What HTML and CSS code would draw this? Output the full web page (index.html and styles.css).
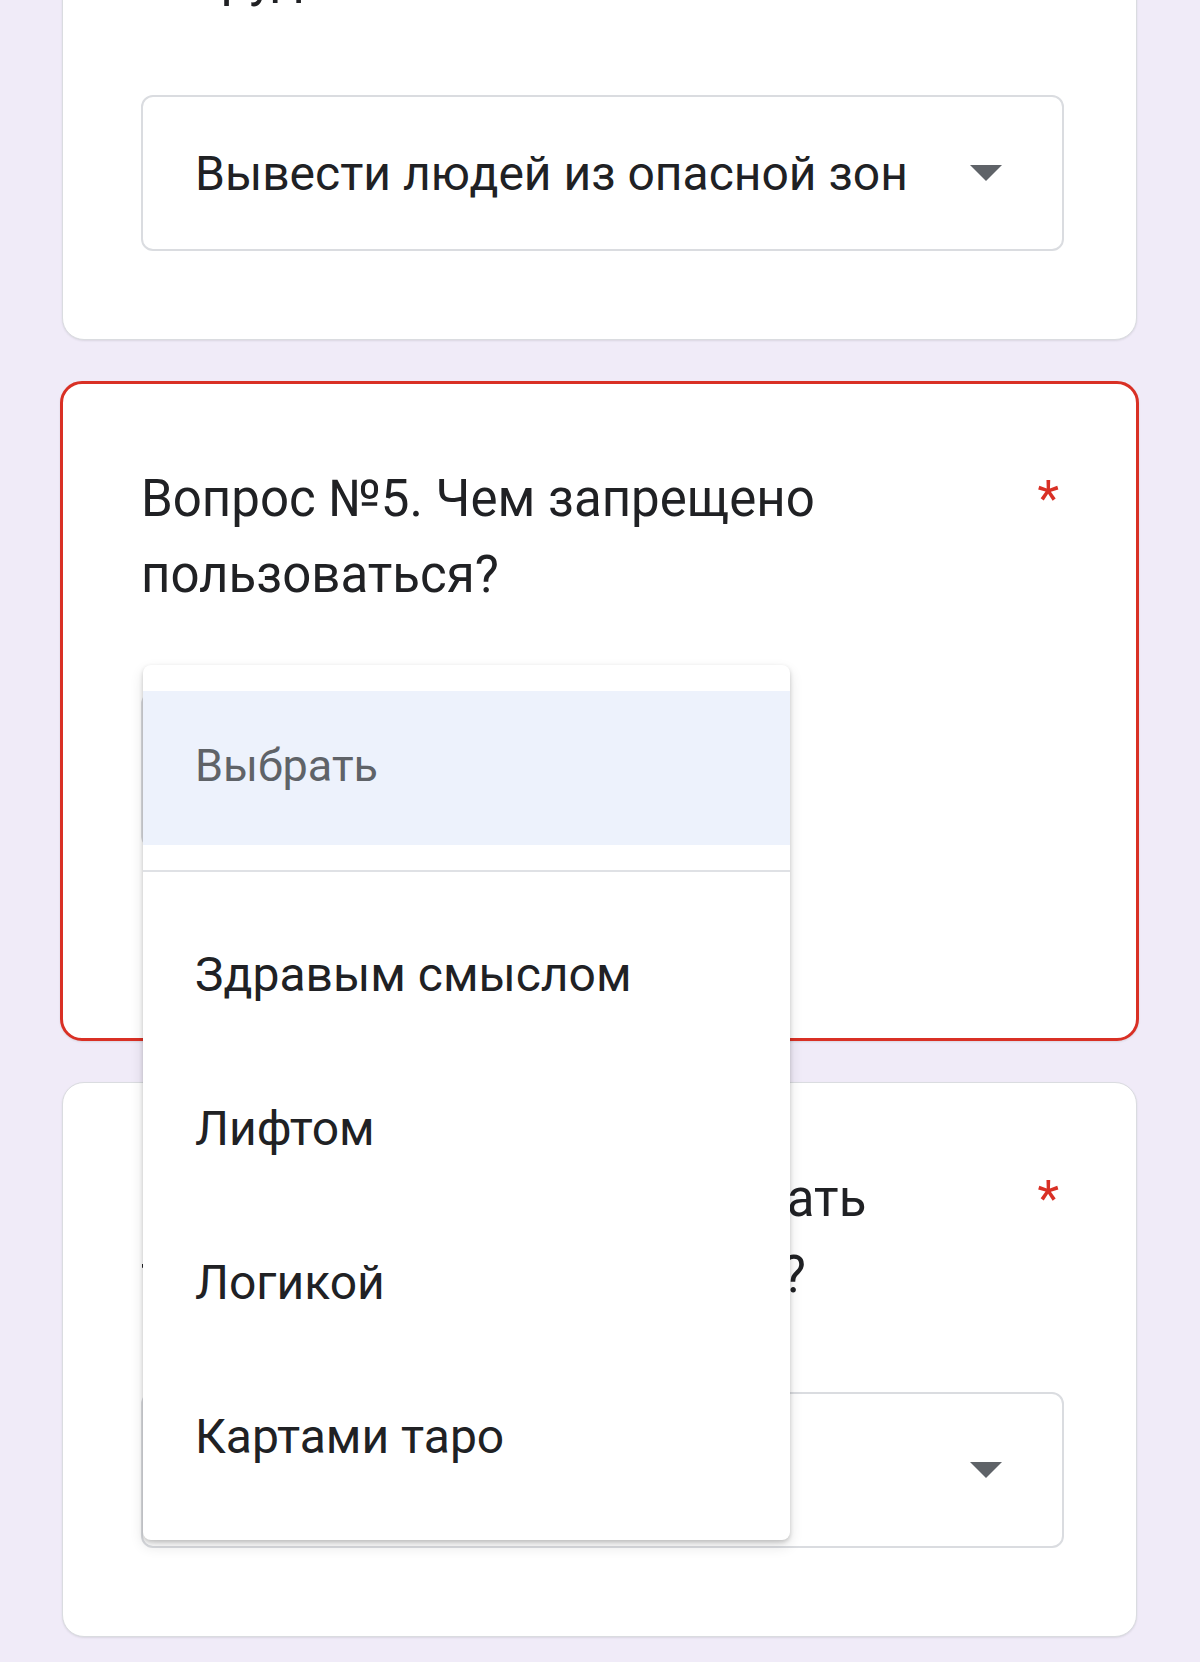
FILE: index.html
```html
<!DOCTYPE html>
<html lang="ru">
<head>
<meta charset="utf-8">
<title>Форма</title>
<link rel="stylesheet" href="styles.css">
</head>
<body>
<main class="form">
  <section class="card">
    <div class="question">
      <div class="question-text">Вопрос №4. Какова первая задача<br>сотрудников?</div>
      <span class="required">*</span>
    </div>
    <div class="select select--wide">
      <span class="select-value">Вывести людей из опасной зоны</span>
      <svg class="select-arrow" width="32" height="16" viewBox="0 0 32 16"><path d="M0 0H32L16 16Z"/></svg>
    </div>
  </section>

  <section class="card card--error">
    <div class="question">
      <div class="question-text">Вопрос №5. Чем запрещено<br>пользоваться?</div>
      <span class="required">*</span>
    </div>
    <div class="select-anchor">
      <div class="select select--compact">
        <span class="select-value select-value--placeholder">Выбрать</span>
        <svg class="select-arrow" width="32" height="16" viewBox="0 0 32 16"><path d="M0 0H32L16 16Z"/></svg>
      </div>
      <ul class="menu">
        <li class="menu-item menu-item--placeholder">Выбрать</li>
        <li class="menu-divider"></li>
        <li class="menu-item">Здравым смыслом</li>
        <li class="menu-item">Лифтом</li>
        <li class="menu-item">Логикой</li>
        <li class="menu-item">Картами таро</li>
      </ul>
    </div>
    <div class="error-msg">Это обязательный вопрос.</div>
  </section>

  <section class="card">
    <div class="question">
      <div class="question-text">Вопрос №6. Что нужно делать<br>тому, кто обнаружил огонь?</div>
      <span class="required">*</span>
    </div>
    <div class="select select--wide">
      <span class="select-value select-value--placeholder">Выбрать</span>
      <svg class="select-arrow" width="32" height="16" viewBox="0 0 32 16"><path d="M0 0H32L16 16Z"/></svg>
    </div>
  </section>
</main>
</body>
</html>
```

FILE: styles.css
```css
* { box-sizing: border-box; }

html, body {
  margin: 0;
  padding: 0;
}

body {
  background: #f0ebf8;
  font-family: Roboto, "Noto Sans", "Liberation Sans", sans-serif;
  color: #202124;
  overflow: hidden;
}

.form {
  display: flex;
  flex-direction: column;
  gap: 41px;
  margin-top: -215px;
  padding: 0 63px 40px 62px;
}

.card {
  background: #fff;
  border: 1px solid #dadce0;
  border-radius: 22px;
  padding: 78px 72px 88px 78px;
  box-shadow: 0 1px 2px rgba(60, 64, 67, 0.12);
}

.card--error {
  border: 3px solid #d93025;
  margin: 0 -2px;
  padding-top: 77px;
  padding-bottom: 86px;
}

.question {
  display: flex;
  align-items: flex-start;
  justify-content: space-between;
  font-size: 51px;
  line-height: 76px;
  margin-bottom: 79px;
}

.question-text {
  white-space: nowrap;
}

.required {
  color: #d93025;
  margin-right: 5px;
  font-size: 50px;
}

.select {
  height: 156px;
  border: 2px solid #dadce0;
  border-radius: 12px;
  display: flex;
  align-items: center;
  gap: 65px;
  padding: 0 60px 0 52px;
  background: #fff;
}

.select--compact {
  width: 649px;
}

.select-value {
  flex: 1;
  min-width: 0;
  overflow: hidden;
  white-space: nowrap;
  font-size: 48px;
  color: #202124;
}

.select-value--placeholder {
  color: #5f6368;
}

.select-arrow {
  flex: none;
  fill: #5f6368;
}

.select-anchor {
  position: relative;
}

.menu {
  position: absolute;
  top: -27px;
  left: 2px;
  width: 647px;
  margin: 0;
  padding: 26px 0;
  list-style: none;
  background: #fff;
  border-radius: 8px;
  box-shadow: 0 2px 4px rgba(0, 0, 0, 0.18), 0 6px 14px rgba(0, 0, 0, 0.12);
  z-index: 2;
}

.menu-item {
  height: 154px;
  line-height: 154px;
  padding-left: 52px;
  font-size: 48px;
  color: #202124;
  white-space: nowrap;
}

.menu-item--placeholder {
  background: #edf2fc;
  color: #5f6368;
  font-size: 45px;
  line-height: 150px;
}

.menu-divider {
  height: 2px;
  margin: 25px 0 26px;
  background: #dfe1e5;
}

.error-msg {
  margin-top: 48px;
  padding-left: 40px;
  line-height: 56px;
  font-size: 36px;
  color: #d93025;
}
```
